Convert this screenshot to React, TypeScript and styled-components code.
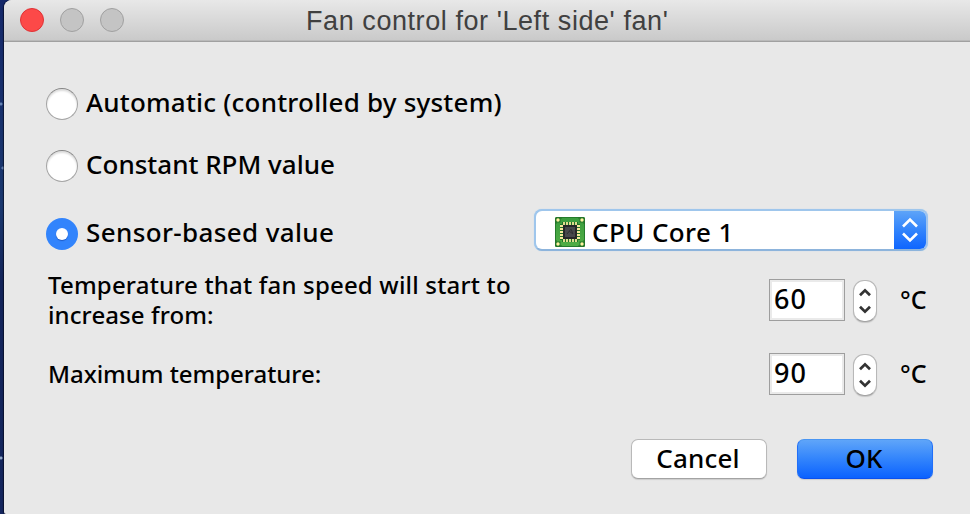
import React from "react";
import styled, { createGlobalStyle, css } from "styled-components";

const GlobalStyle = createGlobalStyle`
  *, *::before, *::after { box-sizing: border-box; }
  body {
    margin: 0;
    overflow: hidden;
    background: #15265c;
    font-family: "Noto Sans", "Open Sans", sans-serif;
    color: #000;
  }
`;

const Desktop = styled.div`
  display: flex;
  width: 970px;
  height: 514px;
  padding-left: 4px;
  background:
    radial-gradient(circle at 1px 104px, #6482b4 0 1px, transparent 2px),
    radial-gradient(circle at 3px 168px, #6482b4 0 1px, transparent 2px),
    radial-gradient(circle at 1px 458px, #8fa6c8 0 1px, transparent 2px),
    linear-gradient(#15286a, #1a386f 40%, #13245a 55%, #14265e);
`;

const Window = styled.main`
  display: flex;
  flex-direction: column;
  flex: 1;
  background: #e8e8e8;
  border-radius: 8px 0 0 2px;
  overflow: hidden;
  box-shadow: -1px 0 1px rgba(0, 0, 10, 0.55);
`;

const TitleBar = styled.header`
  display: grid;
  grid-template-columns: 302px 1fr;
  align-items: center;
  height: 42px;
  background: linear-gradient(#e8e8e8, #c9c9c9);
  border-bottom: 1px solid #a0a0a0;
  box-shadow: inset 0 -1px #b9b9b9;
`;

const Lights = styled.div`
  display: flex;
  gap: 16px;
  padding-left: 16px;
  margin-top: -1px;
`;

const Light = styled.span<{ $active?: boolean }>`
  width: 24px;
  height: 24px;
  border-radius: 50%;
  background: ${(p) => (p.$active ? "#fc4948" : "#c4c4c4")};
  border: 1px solid ${(p) => (p.$active ? "#df3236" : "#a0a0a0")};
`;

const Title = styled.h1`
  margin: 0;
  font: 400 27px/40px "Liberation Sans", Arial, sans-serif;
  letter-spacing: 0.57px;
  color: #404040;
  white-space: nowrap;
`;

const Content = styled.form`
  display: flex;
  flex-direction: column;
  padding: 46px 37px 0 42px;
`;

const Label = styled.span<{ $size?: number; $track?: number }>`
  font-size: ${(p) => p.$size ?? 26}px;
  line-height: 30px;
  font-weight: 500;
  letter-spacing: ${(p) => p.$track ?? 0}px;
  white-space: pre;
`;

const Option = styled.div<{ $gap?: number }>`
  display: flex;
  align-items: center;
  height: 32px;
  margin-bottom: ${(p) => p.$gap ?? 0}px;
`;

const OptionLabel = styled.label`
  display: flex;
  align-items: center;
  gap: 8px;
  flex: 1;

  ${Label} { margin-top: -5px; }
`;

const Radio = styled.span<{ $checked?: boolean }>`
  display: grid;
  place-items: center;
  width: 32px;
  height: 32px;
  border-radius: 50%;
  ${(p) =>
    p.$checked
      ? css`
          background: #3284fc;
          &::after {
            content: "";
            width: 12px;
            height: 12px;
            border-radius: 50%;
            background: #fff;
            box-shadow: 0 1px 1px rgba(0, 30, 120, 0.4);
          }
        `
      : css`
          background: #fff;
          border: 1px solid #a5a5a5;
          border-top-color: #858585;
          box-shadow: inset 0 2px 2px rgba(0, 0, 0, 0.14);
        `}
`;

const Select = styled.div`
  display: flex;
  align-items: center;
  width: 394px;
  height: 42px;
  margin: -8px 5px 0 0;
  border: 2px solid #9fc6ec;
  border-bottom-color: #8db4dc;
  border-right-color: #9fc4ee;
  border-radius: 8px;
  background: #fff;
  overflow: hidden;
  box-shadow: 0 0 1px #a8cdef;
`;

const SelectValue = styled.div`
  display: flex;
  align-items: center;
  flex: 1;
  gap: 7px;
  padding: 4px 0 0 19px;

  ${Label} { margin-top: -1px; }
`;

const SelectArrows = styled.span`
  display: grid;
  place-items: center;
  width: 32px;
  height: 42px;
  background: linear-gradient(#62a7f8, #3284fc 50%, #0b62ff);
`;

const SettingRow = styled.div<{ $height: number }>`
  display: grid;
  grid-template-columns: 723px 84px 47px 1fr;
  align-items: start;
  height: ${(p) => p.$height}px;
`;

const Caption = styled.div<{ $offset?: number }>`
  display: flex;
  flex-direction: column;
  padding-left: 2px;
  margin-top: ${(p) => p.$offset ?? 0}px;
`;

const NumberBox = styled.div`
  width: 76px;
  height: 42px;
  padding: 4px 0 0 4px;
  background: #fff;
  border: 1px solid #9e9e9e;
  box-shadow: inset 0 0 0 2px #eaeaea;
`;

const Stepper = styled.div`
  display: grid;
  place-items: center;
  width: 24px;
  height: 42px;
  margin-top: 1px;
  border: 1px solid #b8b8b8;
  border-bottom-color: #a3a3a3;
  border-radius: 11px;
  background: #fff;
  box-shadow: 0 1px 1px rgba(0, 0, 0, 0.15);
`;

const Unit = styled.div`
  padding-top: 5px;
`;

const Actions = styled.footer`
  display: flex;
  justify-content: flex-end;
  gap: 30px;
`;

const Button = styled.button<{ $primary?: boolean }>`
  display: flex;
  justify-content: center;
  width: 136px;
  height: 40px;
  padding: 3px 2px 1px 0;
  border: 1px solid #b9b9b9;
  border-bottom-color: #a3a3a3;
  border-radius: 7px;
  background: #fff;
  color: #000;
  font-family: inherit;
  box-shadow: 0 1px 1px rgba(0, 0, 0, 0.12);
  ${(p) =>
    p.$primary &&
    css`
      border-color: #4995f2 #216ff8 #0b50ee;
      background: linear-gradient(#5fa5f9, #3284fc 50%, #0b62ff);
    `}
`;

const Chevrons = ({ large = false }: { large?: boolean }) =>
  large ? (
    <svg width="18" height="26" viewBox="0 0 18 26" fill="none" stroke="#fff" strokeWidth="2.6">
      <path d="M2 9.5 9 2.5l7 7M2 16.5l7 7 7-7" />
    </svg>
  ) : (
    <svg width="14" height="26" viewBox="0 0 14 26" fill="none" stroke="#333" strokeWidth="2.7">
      <path d="M2 7.3 7 2.3l5 5M2 18.7l5 5 5-5" />
    </svg>
  );

const PIN_POSITIONS = [9, 12, 15, 18, 21];

const ChipIcon = () => (
  <svg width="30" height="30" viewBox="0 0 30 30">
    <defs>
      <linearGradient id="board" x2="0" y2="1">
        <stop stopColor="#3a9c3e" />
        <stop offset="1" stopColor="#50ad45" />
      </linearGradient>
    </defs>
    <rect width="30" height="30" rx="1.5" fill="#247b2b" />
    <rect x="1" y="1" width="28" height="28" fill="url(#board)" />
    <path d="M1 7V1h6M23 1h6v6M1 23v6h6M23 29h6v-6" fill="none" stroke="#237129" strokeWidth="1" />
    {[3, 27].flatMap((x) =>
      [3, 27].map((y) => (
        <g key={`${x}-${y}`}>
          <rect x={x - 2.5} y={y - 2.5} width="5" height="5" fill="#257629" />
          <circle cx={x} cy={y} r="1.7" fill="#fff3a1" />
        </g>
      ))
    )}
    <path d="M7 5h16v2h2v16h-2v2H7v-2H5V7h2z" fill="#217029" />
    {PIN_POSITIONS.map((n) => (
      <path
        key={n}
        d={`M${n} 5v4M${n} 21v4M5 ${n}h4M21 ${n}h4`}
        stroke="#f4e999"
        strokeWidth="1.8"
      />
    ))}
    <rect x="8" y="8" width="14" height="14" fill="#262829" />
    <rect x="10" y="10" width="10" height="10" fill="#47494b" />
    <path d="m12 17 4-5 2 5-4-3" fill="none" stroke="#303234" />
  </svg>
);

interface SettingProps {
  lines: string[];
  tracks: number[];
  value: string;
  height: number;
  offset: number;
}

const Setting = ({ lines, tracks, value, height, offset }: SettingProps) => (
  <SettingRow $height={height}>
    <Caption $offset={offset}>
      {lines.map((line, i) => (
        <Label key={line} $size={24} $track={tracks[i]}>{line}</Label>
      ))}
    </Caption>
    <NumberBox><Label $size={27} $track={1}>{value}</Label></NumberBox>
    <Stepper><Chevrons /></Stepper>
    <Unit><Label $size={25}>°C</Label></Unit>
  </SettingRow>
);

export default function App() {
  return (
    <>
      <GlobalStyle />
      <Desktop>
        <Window>
          <TitleBar>
            <Lights>
              <Light $active />
              <Light />
              <Light />
            </Lights>
            <Title>Fan control for 'Left side' fan'</Title>
          </TitleBar>
          <Content>
            <Option $gap={30}>
              <OptionLabel><Radio /><Label $track={0.21}>Automatic (controlled by system)</Label></OptionLabel>
            </Option>
            <Option $gap={36}>
              <OptionLabel><Radio /><Label>Constant RPM value</Label></OptionLabel>
            </Option>
            <Option $gap={29}>
              <OptionLabel><Radio $checked /><Label $track={0.37}>Sensor-based value</Label></OptionLabel>
              <Select>
                <SelectValue><ChipIcon /><Label $track={0.4}>CPU Core 1</Label></SelectValue>
                <SelectArrows><Chevrons large /></SelectArrows>
              </Select>
            </Option>
            <Setting
              lines={["Temperature that fan speed will start to", "increase from:"]}
              tracks={[0.18, 0.1]}
              value="60"
              height={74}
              offset={-9}
            />
            <Setting lines={["Maximum temperature:"]} tracks={[-0.04]} value="90" height={86} offset={6} />
            <Actions>
              <Button type="button"><Label $track={0.2}>Cancel</Label></Button>
              <Button type="button" $primary><Label>OK</Label></Button>
            </Actions>
          </Content>
        </Window>
      </Desktop>
    </>
  );
}
